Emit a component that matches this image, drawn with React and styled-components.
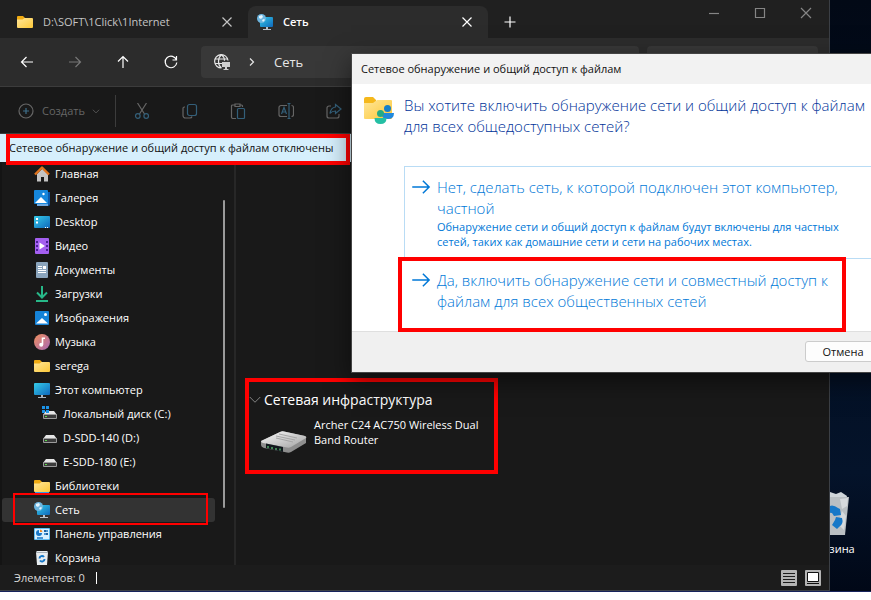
import React from 'react'
import styled, { createGlobalStyle } from 'styled-components'

const places = [
    { id: 1, name: 'Главная', icon: 'home' },
    { id: 2, name: 'Галерея', icon: 'gallery' },
    { id: 3, name: 'Desktop', icon: 'desktop' },
    { id: 4, name: 'Видео', icon: 'video' },
    { id: 5, name: 'Документы', icon: 'docs' },
    { id: 6, name: 'Загрузки', icon: 'download' },
    { id: 7, name: 'Изображения', icon: 'picture' },
    { id: 8, name: 'Музыка', icon: 'music' },
    { id: 9, name: 'serega', icon: 'folder' },
    { id: 10, name: 'Этот компьютер', icon: 'computer' },
    { id: 11, name: 'Локальный диск (C:)', icon: 'diskC', nested: true },
    { id: 12, name: 'D-SDD-140 (D:)', icon: 'disk', nested: true },
    { id: 13, name: 'E-SDD-180 (E:)', icon: 'disk', nested: true },
    { id: 14, name: 'Библиотеки', icon: 'library' },
    { id: 15, name: 'Сеть', icon: 'network', selected: true },
    { id: 16, name: 'Панель управления', icon: 'control' },
    { id: 17, name: 'Корзина', icon: 'bin' },
]

// 16x16 color icons
const pictures = {
    home: (
        <>
            <path d="M3 8v7.500h4V11h3v4.500h4V8L8.500 2.500z" fill="#c4c4c4" />
            <path d="M1 8.500L8 1.500l7 7" fill="none" stroke="#e0731c" strokeWidth="2.400" strokeLinejoin="round" />
        </>
    ),
    gallery: (
        <>
            <path d="M3 2h13v12a2 2 0 0 1-2 2H3z" fill="#0b57a8" />
            <path d="M3 14h11v2H3z" fill="#6ea8e0" />
            <rect width="14" height="14" rx="1" fill="#1687dc" />
            <path d="M1 13l6-6 6 6z" fill="#fff" />
            <circle cx="9.500" cy="4" r="1.200" fill="#fff" />
        </>
    ),
    desktop: (
        <>
            <rect y="2" width="16" height="12" rx="1" fill="url(#screen)" />
            <path d="M2 4h2v2H2zM2 7.500h2v2H2z" fill="#fff" />
            <path d="M11 13h1v1h-1zM13 13h1v1h-1z" fill="#fff" />
        </>
    ),
    video: (
        <>
            <rect x="1" width="14" height="16" rx="1" fill="#a45ff0" />
            <path d="M2 3h2v2H2zM2 7h2v2H2zM2 11h2v2H2zM12 3h2v2h-2zM12 7h2v2h-2zM12 11h2v2h-2z" fill="#4a2196" />
            <path d="M5.500 4.500l5.500 3.500-5.500 3.500z" fill="#fff" />
        </>
    ),
    docs: (
        <>
            <rect x="2" width="12" height="16" rx="1" fill="#8ba5bd" />
            <path d="M4 4h4v1H4zM4 6h4v1H4zM4 8h8v1H4zM4 10h8v1H4zM9 4h3v3H9z" fill="#fff" />
        </>
    ),
    download: (
        <path d="M8 0v11M3 6.500L8 11.500l5-5M2 15h12" fill="none" stroke="#27b888" strokeWidth="2" />
    ),
    picture: (
        <>
            <rect x="1" y="1" width="14" height="14" rx="1" fill="#1583d8" />
            <path d="M2 13.500l6-5.500 6 5.500z" fill="#fff" />
            <circle cx="11.500" cy="4.500" r="1.500" fill="#fff" />
        </>
    ),
    music: (
        <>
            <circle cx="8" cy="8" r="8" fill="url(#disc)" />
            <path d="M8.500 3.500v7M8.500 4.300H11" fill="none" stroke="#fff" strokeWidth="1.600" />
            <circle cx="7.200" cy="10.800" r="2" fill="#fff" />
        </>
    ),
    folder: (
        <>
            <path d="M0 3a1 1 0 0 1 1-1h5l2 2v4H0z" fill="#f0ab12" />
            <path d="M0 5.500h5.500L7.500 4H15a1 1 0 0 1 1 1v8a1 1 0 0 1-1 1H1a1 1 0 0 1-1-1z" fill="url(#paper)" />
        </>
    ),
    library: (
        <>
            <path d="M0 3a1 1 0 0 1 1-1h5l2 2v4H0z" fill="#f0ab12" />
            <path d="M0 5.500h5.500L7.500 4H15a1 1 0 0 1 1 1v8a1 1 0 0 1-1 1H1a1 1 0 0 1-1-1z" fill="url(#paper)" />
            <path d="M1 14h14v1.500H1z" fill="#2f9bea" />
        </>
    ),
    computer: (
        <>
            <rect y="1" width="16" height="12" rx="1" fill="url(#screen)" />
            <path d="M7 13h2v2h3v1H4v-1h3z" fill="#a9b4bf" />
        </>
    ),
    disk: (
        <>
            <path d="M4 5h8l3 4H1z" fill="#e6e6e6" />
            <rect x="1" y="8" width="14" height="5" rx="1" fill="#9b9b9b" />
            <path d="M2 9h12v3H2z" fill="#3c3c3c" />
            <path d="M3 10h2v1H3z" fill="#5ddc4b" />
        </>
    ),
    diskC: (
        <>
            <path d="M4 5h8l3 4H1z" fill="#e6e6e6" />
            <rect x="1" y="8" width="14" height="5" rx="1" fill="#9b9b9b" />
            <path d="M2 9h12v3H2z" fill="#3c3c3c" />
            <path d="M3 10h2v1H3z" fill="#5ddc4b" />
            <path d="M0 0h3v3H0zM4 0h3v3H4zM0 4h3v3H0zM4 4h3v3H4z" fill="#1b93e8" />
        </>
    ),
    network: (
        <>
            <path d="M3 3h12a1 1 0 0 1 1 1v8a1 1 0 0 1-1 1H4a1 1 0 0 1-1-1z" fill="url(#screen)" />
            <path d="M9 13h2v2h3v1H6v-1h3z" fill="#b9c2cb" />
            <circle cx="4.500" cy="4.500" r="4.500" fill="#6db6e0" />
            <path d="M2 2l3-1 1 2-2 2-2-1zM5 6l2-1 1 1-2 2z" fill="#e4f5ff" />
        </>
    ),
    control: (
        <>
            <rect y="2" width="16" height="12" rx="1" fill="#62bdf2" />
            <path d="M1 3h14v10H1z" fill="#d8f0ff" />
            <path d="M5 4a3 3 0 1 0 3 3H5z" fill="#1977c8" />
            <path d="M6 3.500A3 3 0 0 1 8.500 6H6z" fill="#f08a24" />
            <path d="M10 5h4M10 8h4M3 12h6" stroke="#1977c8" strokeWidth="1.300" />
            <path d="M11 4v2M13 7v2" stroke="#0e4c88" strokeWidth="1.500" />
        </>
    ),
    bin: (
        <>
            <path d="M2 2l1-1h10l1 1-1 13H3z" fill="#e8edf0" />
            <path d="M2 2h12v1H2z" fill="#a7afb5" />
            <path d="M5.500 8.500a2.500 2.500 0 0 1 4.500-1.500M10.500 9A2.500 2.500 0 0 1 6 10.500" fill="none" stroke="#1678c8" strokeWidth="2" />
        </>
    ),
}

const Pic = ({ name }) => (
    <PicSvg viewBox="0 0 16 16" aria-hidden="true">{pictures[name]}</PicSvg>
)

// shared gradients
const Gradients = () => (
    <HiddenSvg aria-hidden="true">
        <defs>
            <linearGradient id="screen" x1="0" y1="0" x2="1" y2="1">
                <stop offset="0" stopColor="#35cbe8" />
                <stop offset="1" stopColor="#0f68bd" />
            </linearGradient>
            <linearGradient id="paper" x1="0" y1="0" x2="1" y2="1">
                <stop offset="0" stopColor="#ffe699" />
                <stop offset="1" stopColor="#fcc838" />
            </linearGradient>
            <linearGradient id="disc" x1="0" y1="0" x2="1" y2="1">
                <stop offset="0" stopColor="#f0905e" />
                <stop offset="1" stopColor="#a767b4" />
            </linearGradient>
            <linearGradient id="metal" x1="0" y1="0" x2="1" y2="1">
                <stop offset="0" stopColor="#fafafa" />
                <stop offset="1" stopColor="#a2a2a2" />
            </linearGradient>
        </defs>
    </HiddenSvg>
)

const Line = ({ d, size = 16, children }) => (
    <LineSvg viewBox="0 0 16 16" $size={size} aria-hidden="true">
        {d && <path d={d} />}
        {children}
    </LineSvg>
)

const CROSS = 'M3.500 3.500l9 9M12.500 3.500l-9 9'

function TabBar() {
    return (
        <Tabs>
            <Tab>
                <Pic name="folder" />
                <TabName>D:\SOFT\1Click\1Internet</TabName>
                <PlainButton aria-label="Закрыть вкладку"><Line d={CROSS} /></PlainButton>
            </Tab>
            <Tab $active>
                <Pic name="network" />
                <TabName>Сеть</TabName>
                <PlainButton aria-label="Закрыть вкладку"><Line d={CROSS} /></PlainButton>
            </Tab>
            <NewTab aria-label="Новая вкладка"><Line d="M8 2.500v11M2.500 8h11" /></NewTab>
            <WindowButtons>
                <PlainButton aria-label="Свернуть"><Line d="M3 8.500h10" /></PlainButton>
                <PlainButton aria-label="Развернуть"><Line d="M3.500 3.500h9v9h-9z" /></PlainButton>
                <PlainButton aria-label="Закрыть"><Line d="M3 3l10 10M13 3L3 13" /></PlainButton>
            </WindowButtons>
        </Tabs>
    )
}

function AddressBar() {
    return (
        <Address>
            <PlainButton aria-label="Назад"><Line d="M14 8H2.500M7.500 3L2.500 8l5 5" /></PlainButton>
            <PlainButton aria-label="Вперёд" $dim><Line d="M2 8h11.500M8.500 3l5 5-5 5" /></PlainButton>
            <PlainButton aria-label="Вверх"><Line d="M8 14V2.500M3 7.500l5-5 5 5" /></PlainButton>
            <PlainButton aria-label="Обновить"><Line d="M13.500 6A5.800 5.800 0 1 0 13.800 8.500M13.500 2v4h-4" /></PlainButton>
            <PathBox>
                <LineSvg viewBox="0 0 16 16" $size={16} aria-hidden="true">
                    <path d="M14 6.500A6.700 6.700 0 1 0 7.500 14M1 5h12.500M1 9.500h7M7.500.8C3.500 4 3.500 11 7.500 14M7.500.8c2 1.500 3 4 3 6" />
                    <path d="M8 8h8v5H8zM11 13h2v2h-2zM9.500 15h5v1h-5z" fill="#d0d0d0" stroke="none" />
                </LineSvg>
                <Line d="M6 4.500L9.500 8 6 11.500" />
                <PathName>Сеть</PathName>
            </PathBox>
            <Search aria-label="Поиск" />
        </Address>
    )
}

function CommandBar() {
    return (
        <Commands>
            <CreateButton>
                <Line>
                    <circle cx="8" cy="8" r="7" />
                    <path d="M8 5v6M5 8h6" stroke="#3f6f8a" />
                </Line>
                <span>Создать</span>
                <Line size={10} d="M3 6l5 5 5-5" />
            </CreateButton>
            <Separator />
            <PlainButton aria-label="Вырезать">
                <Line d="M3.500 0l7 11M12.500 0l-7 11">
                    <circle cx="3.800" cy="13" r="2.300" stroke="#335f79" />
                    <circle cx="12.200" cy="13" r="2.300" stroke="#335f79" />
                </Line>
            </PlainButton>
            <PlainButton aria-label="Копировать">
                <Line d="M3 4H2.500A1.500 1.500 0 0 0 1 5.500v7A2.500 2.500 0 0 0 3.500 15H8a2 2 0 0 0 2-1.500">
                    <rect x="5.500" y="1.500" width="9" height="11" rx="2" stroke="#335f79" />
                </Line>
            </PlainButton>
            <PlainButton aria-label="Вставить">
                <Line d="M5 2H2.500A1 1 0 0 0 1.500 3v11a1.500 1.500 0 0 0 1.500 1.500h3M10 2h1.500a1 1 0 0 1 1 1v1M5 1h5v2.500H5z">
                    <rect x="7.500" y="5.500" width="7" height="10" rx="1" stroke="#335f79" />
                </Line>
            </PlainButton>
            <PlainButton aria-label="Переименовать">
                <Line d="M9 2.500H3A2 2 0 0 0 1 4.500v7a2 2 0 0 0 2 2h6M13.500 2.500a2 2 0 0 1 2 2v7a2 2 0 0 1-2 2">
                    <path d="M3.500 11L6 4.500 8.500 11M4.500 9h3M9.500.5h3M9.500 15.500h3M11 .5v15" stroke="#335f79" />
                </Line>
            </PlainButton>
            <PlainButton aria-label="Поделиться">
                <Line d="M5 3H3a2 2 0 0 0-2 2v8a2 2 0 0 0 2 2h8a2 2 0 0 0 2-2v-2">
                    <path d="M9.500 1.500L15 6l-5.500 4.500V8C7 8 5.500 8.500 4 10.500 4.500 7 6 4.500 9.500 4z" stroke="#335f79" />
                </Line>
            </PlainButton>
        </Commands>
    )
}

function Sidebar() {
    return (
        <Side>
            <Places>
                {places.map((item) => (
                    <Place key={item.id} href="#" $nested={item.nested} $selected={item.selected}>
                        <Pic name={item.icon} />
                        {item.name}
                        {item.selected && <PlaceMark />}
                    </Place>
                ))}
            </Places>
            <ScrollThumb />
        </Side>
    )
}

function Router() {
    return (
        <RouterSvg viewBox="0 0 48 24" aria-hidden="true">
            <path d="M1 10L20 1q2-1 4-.5L45 5q2 1 1 3v4L31 21q-2 1-4 .5L4 17q-3-1-3-3z" fill="#8e8e8e" />
            <path d="M1 10L20 1q2-1 4-.5L45 5q2 1 1 2L31 16q-2 1-4 .5L3 12q-2-.5-2-2z" fill="url(#metal)" />
            <path d="M19 3l18 4M16 5l19 4M16 7l17 4" stroke="#a5a5a5" />
            <path d="M6 12.500l17 3.500v5L6 17z" fill="#11181d" />
            <path d="M8 15v2M12 16v2M16 17v2M20 17.500v2" stroke="#51a766" strokeWidth="1.500" />
        </RouterSvg>
    )
}

function Content() {
    return (
        <Main>
            <Group>
                <GroupTitle>
                    <Line size={12} d="M1 4l7 7 7-7" />
                    <span>Сетевая инфраструктура</span>
                </GroupTitle>
                <Device href="#">
                    <Router />
                    <DeviceName>Archer C24 AC750 Wireless Dual<br />Band Router</DeviceName>
                </Device>
            </Group>
        </Main>
    )
}

function Dialog() {
    return (
        <DialogBox role="dialog" aria-labelledby="dialog-title">
            <DialogTitle id="dialog-title">Сетевое обнаружение и общий доступ к файлам</DialogTitle>
            <DialogBody>
                <Question>
                    <ShareSvg viewBox="0 0 30 28" aria-hidden="true">
                        <path d="M0 2q0-2 2-2h7l3 3v6H0z" fill="#f5b81c" />
                        <path d="M0 6h9l4-3h14q1 0 1 1v17q0 1-1 1H1q-1 0-1-1z" fill="url(#paper)" />
                        <circle cx="23.500" cy="11.500" r="3.500" fill="#167fc8" />
                        <path d="M18 16h12q0 6-6 6t-6-4z" fill="#2189dc" />
                        <circle cx="16.500" cy="16.500" r="3.500" fill="#24aa86" />
                        <path d="M10.500 21h12q0 6-6 6t-6-6z" fill="#24bfa4" />
                    </ShareSvg>
                    <h2>
                        Вы хотите включить обнаружение сети и общий доступ к файлам
                        <br />
                        для всех общедоступных сетей?
                    </h2>
                </Question>
                <Option $framed>
                    <Line size={20} d="M1 8h13.500M9.500 3l5 5-5 5" />
                    <span>
                        Нет, сделать сеть, к которой подключен этот компьютер,
                        <br />
                        частной
                        <small>
                            Обнаружение сети и общий доступ к файлам будут включены для частных
                            <br />
                            сетей, таких как домашние сети и сети на рабочих местах.
                        </small>
                    </span>
                </Option>
                <Option>
                    <Line size={20} d="M1 8h13.500M9.500 3l5 5-5 5" />
                    <span>
                        Да, включить обнаружение сети и совместный доступ к
                        <br />
                        файлам для всех общественных сетей
                    </span>
                    <OptionMark />
                </Option>
            </DialogBody>
            <DialogFooter>
                <CancelButton>Отмена</CancelButton>
            </DialogFooter>
        </DialogBox>
    )
}

function App() {
    return (
        <>
            <GlobalStyle />
            <Gradients />
            <Desktop>
                <Shortcut href="#">
                    <BinSvg viewBox="0 0 36 46" aria-hidden="true">
                        <path d="M3 6l4-4 5 2 4-3 6 2 5-2 6 4-1 4H3z" fill="#cfd6da" />
                        <path d="M1 6h34l-4 38H5z" fill="#b9bfc3" />
                        <path d="M26 8l8-1-1 8-5 3zM28 20l4 5-2 14-6-6z" fill="#d6dadd" />
                        <path d="M12 17q6-5 12 0l2 1 1 6-7 1-2-3q-4-1-6 1z" fill="#1678c8" />
                        <path d="M18 34l3-5 1-3 6 1q2 6-3 9l-2 2z" fill="#1678c8" />
                    </BinSvg>
                    Корзина
                </Shortcut>
                <Explorer>
                    <TabBar />
                    <AddressBar />
                    <CommandBar />
                    <InfoBar>
                        Сетевое обнаружение и общий доступ к файлам отключены
                        <InfoMark />
                    </InfoBar>
                    <Panes>
                        <Sidebar />
                        <Content />
                    </Panes>
                    <Status>
                        <StatusText>Элементов: 0</StatusText>
                        <ViewButton aria-label="Таблица">
                            <svg viewBox="0 0 16 16" aria-hidden="true">
                                <rect width="16" height="16" rx="1" fill="#b4b4b4" />
                                <path d="M2 3.500h12M2 6.500h12M2 9.500h12M2 12.500h12" stroke="#1c1c1c" />
                            </svg>
                        </ViewButton>
                        <ViewButton aria-label="Крупные значки">
                            <svg viewBox="0 0 16 16" aria-hidden="true">
                                <rect width="16" height="16" rx="1" fill="#b4b4b4" />
                                <path d="M2.500 2.500h11v9h-11z" fill="#fff" stroke="#111" />
                                <path d="M2 13.500h12" stroke="#111" />
                            </svg>
                        </ViewButton>
                    </Status>
                </Explorer>
                <Dialog />
            </Desktop>
        </>
    )
}

export default App

const GlobalStyle = createGlobalStyle`
    * {
        box-sizing: border-box;
    }
    body {
        margin: 0;
        background: #ffffff;
        color: #ffffff;
        font: 11px/16px "Open Sans", "Noto Sans", sans-serif;
    }
    button, input {
        font: inherit;
        color: inherit;
        border: none;
        background: none;
        padding: 0;
    }
    a {
        color: inherit;
        text-decoration: none;
    }
`;

const HiddenSvg = styled.svg`
    position: absolute;
    width: 0;
    height: 0;
`;

const PicSvg = styled.svg`
    flex: none;
    width: 16px;
    height: 16px;
`;

const LineSvg = styled.svg`
    flex: none;
    display: block;
    width: ${(props) => props.$size}px;
    height: ${(props) => props.$size}px;
    fill: none;
    stroke: currentColor;
    stroke-width: 1.2;
`;

const PlainButton = styled.button`
    display: flex;
    justify-content: center;
    color: ${(props) => (props.$dim ? '#777777' : 'inherit')};
`;

const Desktop = styled.div`
    position: relative;
    height: calc(100vh - 8px);
    overflow: hidden;
    background: linear-gradient(to bottom, #020916, #04132a 80%, #010817);
    border-bottom: 1px solid #17235c;
`;

const Shortcut = styled.a`
    position: absolute;
    right: 4px;
    bottom: 34px;
    width: 70px;
    display: flex;
    flex-direction: column;
    align-items: center;
    gap: 4px;
`;

const BinSvg = styled.svg`
    width: 36px;
    height: 46px;
`;

const Explorer = styled.div`
    position: absolute;
    inset: 0 41px 0 0;
    display: flex;
    flex-direction: column;
    background: #191919;
    border-right: 1px solid #3b3f45;
    border-bottom: 1px solid #3b3f45;
`;

const Tabs = styled.div`
    display: flex;
    align-items: flex-end;
    height: 38px;
    background: #202020;
`;

const Tab = styled.div`
    display: flex;
    align-items: center;
    gap: 10px;
    width: ${(props) => (props.$active ? '240px' : '248px')};
    height: 32px;
    padding: 0 13px 0 ${(props) => (props.$active ? '9px' : '17px')};
    border-radius: 8px 8px 0 0;
    background: ${(props) => (props.$active ? '#2c2c2c' : 'transparent')};
    color: ${(props) => (props.$active ? '#ffffff' : '#c4c4c4')};
    font-weight: ${(props) => (props.$active ? 600 : 400)};
`;

const TabName = styled.span`
    flex: 1;
    line-height: 18px;
    white-space: nowrap;
`;

const NewTab = styled(PlainButton)`
    align-self: center;
    margin: 6px 0 0 14px;
`;

const WindowButtons = styled.div`
    display: flex;
    align-self: flex-start;
    gap: 30px;
    margin-left: auto;
    padding: 5px 15px 0 0;
    color: #858585;
`;

const Address = styled.div`
    display: flex;
    align-items: center;
    height: 49px;
    padding: 0 11px 0 19px;
    background: #2c2c2c;
    border-bottom: 1px solid #3c3c3c;

    > button {
        margin-right: 32px;
    }
    > button:nth-child(4) {
        margin-right: 22px;
    }
`;

const PathBox = styled.div`
    display: flex;
    align-items: center;
    gap: 14px;
    flex: 1;
    height: 32px;
    padding: 0 13px;
    border-radius: 4px;
    background: #383838;
    color: #e6e6e6;
`;

const PathName = styled.span`
    font-size: 13px;
`;

const Search = styled.input`
    width: 171px;
    height: 32px;
    margin-left: 8px;
    border-radius: 4px;
    background: #383838;
`;

const Commands = styled.div`
    display: flex;
    align-items: center;
    gap: 32px;
    height: 47px;
    padding: 2px 18px 0;
    color: #666666;
    border-bottom: 1px solid #3c3c3c;
`;

const CreateButton = styled.button`
    display: flex;
    align-items: center;
    gap: 8px;
    width: 82px;
    font-size: 11px;
    white-space: nowrap;

    > svg:last-child {
        margin-left: -2px;
    }
`;

const Separator = styled.div`
    width: 1px;
    height: 32px;
    margin: 0 -14px 0 -17px;
    background: #3c3c3c;
`;

const InfoBar = styled.div`
    position: relative;
    height: 28px;
    padding: 0 9px;
    line-height: 28px;
    background: #d6effc;
    color: #111111;
    white-space: nowrap;
`;

// red highlight frames
const Mark = styled.div`
    position: absolute;
    border: 4px solid #ff0000;
    pointer-events: none;
`;

const InfoMark = styled(Mark)`
    top: 0;
    left: 6px;
    width: 344px;
    height: 31px;
    z-index: 1;
`;

const Panes = styled.div`
    display: flex;
    flex: 1;
    min-height: 0;
`;

const Side = styled.nav`
    display: flex;
    width: 236px;
    overflow: hidden;
    border-left: 2px solid #141414;
    border-right: 2px solid #272727;
`;

const Places = styled.div`
    flex: 1;
    display: flex;
    flex-direction: column;
`;

const Place = styled.a`
    position: relative;
    flex: none;
    display: flex;
    align-items: center;
    gap: 5px;
    height: 24px;
    padding-left: ${(props) => (props.$nested ? '40px' : '32px')};
    background: ${(props) => (props.$selected ? '#333333' : 'transparent')};
    border-radius: 3px;
    white-space: nowrap;
`;

const PlaceMark = styled(Mark)`
    inset: -5px 7px -3px 11px;
    border-width: 2px;
`;

const ScrollThumb = styled.div`
    width: 2px;
    margin: 38px 9px 57px 8px;
    border-radius: 1px;
    background: #9a9a9a;
`;

const Main = styled.main`
    flex: 1;
    padding: 216px 0 0 9px;
`;

const Group = styled.section`
    width: 253px;
    height: 96px;
    border: 4px solid #ff0000;
    padding-top: 6px;
`;

const GroupTitle = styled.div`
    display: flex;
    align-items: center;
    gap: 3px;
    font-size: 14px;
    line-height: 24px;
    white-space: nowrap;

    > svg {
        color: #909090;
    }
`;

const Device = styled.a`
    display: flex;
    padding: 5px 0 0 11px;
    gap: 6px;
`;

const DeviceName = styled.span`
    line-height: 15px;
    white-space: nowrap;
`;

const RouterSvg = styled.svg`
    flex: none;
    width: 48px;
    height: 24px;
    margin-top: 14px;
`;

const Status = styled.footer`
    display: flex;
    align-items: center;
    gap: 8px;
    height: 25px;
    padding: 0 8px 0 14px;
    background: #1c1c1c;
    color: #d8d8d8;
`;

const StatusText = styled.span`
    display: flex;
    margin-right: auto;

    &::after {
        content: '';
        width: 1px;
        height: 12px;
        margin: 2px 0 0 11px;
        background: #ffffff;
    }
`;

const ViewButton = styled.button`
    width: 16px;
    height: 16px;

    > svg {
        display: block;
    }
`;

const DialogBox = styled.div`
    position: absolute;
    top: 53px;
    left: 351px;
    right: -22px;
    z-index: 2;
    background: #ffffff;
    border: 1px solid #444444;
    box-shadow: 0 8px 24px rgba(0, 0, 0, 0.5);
    color: #0078d7;
    white-space: nowrap;
`;

const DialogTitle = styled.div`
    height: 30px;
    padding-left: 9px;
    line-height: 30px;
    background: #f2f2f2;
    color: #111111;
`;

const DialogBody = styled.div`
    display: flex;
    flex-direction: column;
    padding: 11px 11px 0 12px;
`;

const Question = styled.div`
    display: flex;
    gap: 10px;
    height: 71px;

    h2 {
        margin: 0;
        font-size: 15px;
        font-weight: 350;
        line-height: 21px;
        color: #003399;
    }
`;

const ShareSvg = styled.svg`
    flex: none;
    width: 30px;
    height: 28px;
    margin-top: 2px;
`;

const Option = styled.button`
    position: relative;
    display: flex;
    gap: 6px;
    height: ${(props) => (props.$framed ? '93px' : '72px')};
    margin-left: 40px;
    padding: 10px 0 0 6px;
    border: 1px solid ${(props) => (props.$framed ? '#b9dcf5' : 'transparent')};
    font-size: 15px;
    font-weight: 350;
    line-height: 21px;
    text-align: left;

    small {
        display: block;
        font-size: 11px;
        font-weight: 400;
        line-height: 15px;
    }
`;

const OptionMark = styled(Mark)`
    top: -3px;
    left: -7px;
    width: 448px;
    height: 75px;
`;

const DialogFooter = styled.div`
    display: flex;
    justify-content: flex-end;
    padding: 9px 11px 10px;
    background: #f0f0f0;
    border-top: 1px solid #dfdfdf;
`;

const CancelButton = styled.button`
    width: 76px;
    height: 21px;
    border: 1px solid #cccccc;
    border-radius: 3px;
    background: #fdfdfd;
    color: #111111;
    line-height: 18px;
`;
